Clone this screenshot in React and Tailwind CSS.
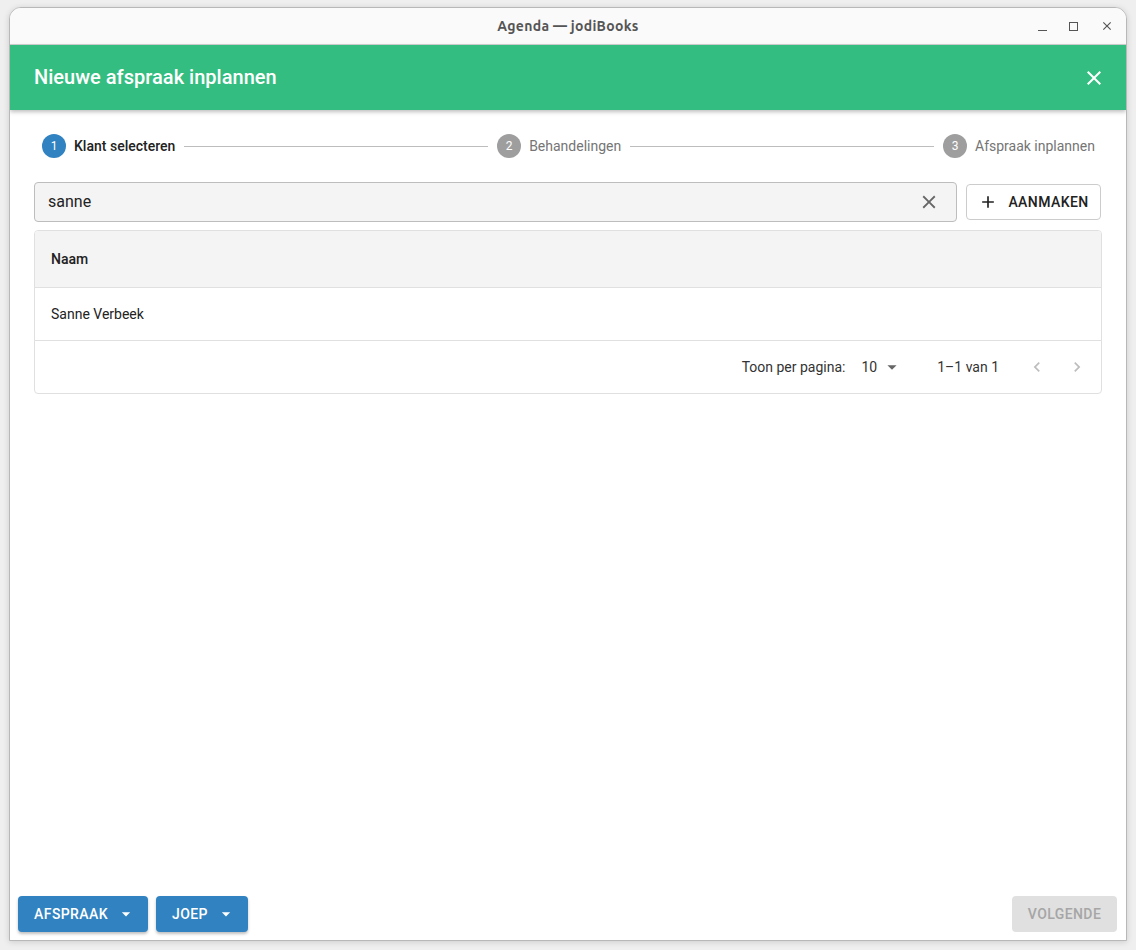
import React from "react";

const roboto = { fontFamily: "Roboto, 'Noto Sans', sans-serif" };
const medium = { fontFamily: "'Roboto Medium', Roboto, sans-serif", fontWeight: 500 };

function CloseIcon({ className }) {
  return (
    <svg viewBox="0 0 24 24" className={className} fill="currentColor">
      <path d="M19 6.41 17.59 5 12 10.59 6.41 5 5 6.41 10.59 12 5 17.59 6.41 19 12 13.41 17.59 19 19 17.59 13.41 12z" />
    </svg>
  );
}

function Caret({ className }) {
  return (
    <svg viewBox="0 0 24 24" className={className} fill="currentColor">
      <path d="M7 10l5 5 5-5z" />
    </svg>
  );
}

function Step({ n, label, active }) {
  return (
    <div className="flex items-center gap-2 shrink-0">
      <div
        className={`w-6 h-6 rounded-full flex items-center justify-center text-[12px] text-white ${
          active ? "bg-[#3182c1]" : "bg-[#9e9e9e]"
        }`}
      >
        {n}
      </div>
      <span className={`text-[14px] ${active ? "text-[#222]" : "text-[#757575]"}`} style={active ? medium : undefined}>
        {label}
      </span>
    </div>
  );
}

export default function App() {
  return (
    <div className="w-[1136px] h-[950px] bg-[#efefef] pt-[7px] pl-[9px] pr-[9px] pb-[9px]" style={roboto}>
      <div className="w-[1118px] h-[934px] bg-white rounded-t-[12px] border border-[#b8b8b8] flex flex-col overflow-hidden shadow-[0_1px_6px_rgba(0,0,0,0.15)]">
        {/* title bar */}
        <div className="h-[37px] shrink-0 bg-[#fafafa] border-b border-[#d0d0d0] flex items-center relative">
          <div
            className="flex-1 text-center text-[14px] font-bold text-[#555] tracking-[0.3px]"
            style={{ fontFamily: "'Ubuntu', 'DejaVu Sans', sans-serif" }}
          >
            Agenda — jodiBooks
          </div>
          <div className="absolute right-0 top-0 h-full flex items-center gap-[22px] pr-[12px] text-[#555]">
            <div className="w-[9px] h-[1px] bg-[#555] mt-[9px]" />
            <div className="w-[9px] h-[9px] border border-[#555]" />
            <CloseIcon className="w-[14px] h-[14px]" />
          </div>
        </div>

        {/* green header */}
        <div className="h-[65px] shrink-0 bg-[#33bd80] flex items-center justify-between pl-[24px] pr-[20px] shadow-[0_2px_4px_rgba(0,0,0,0.25)] relative z-10">
          <div className="text-white text-[20px] pb-[2px]" style={medium}>Nieuwe afspraak inplannen</div>
          <CloseIcon className="w-[24px] h-[24px] text-white" />
        </div>

        {/* content */}
        <div className="flex-1 flex flex-col px-[24px] pt-[23px]">
          {/* stepper */}
          <div className="flex items-center pl-[8px] pr-[7px] h-[26px]">
            <Step n="1" label="Klant selecteren" active />
            <div className="flex-1 h-px bg-[#bdbdbd] mx-[9px]" />
            <Step n="2" label="Behandelingen" />
            <div className="flex-1 h-px bg-[#bdbdbd] mx-[9px]" />
            <Step n="3" label="Afspraak inplannen" />
          </div>

          {/* search */}
          <div className="flex items-center gap-[9px] mt-[23px]">
            <div className="flex-1 h-[40px] bg-[#f4f4f4] border border-[#bdbdbd] rounded-[4px] flex items-center pl-[13px] pr-[16px]">
              <span className="flex-1 text-[16px] text-[#222]">sanne</span>
              <CloseIcon className="w-[22px] h-[22px] text-[#666]" />
            </div>
            <div
              className="w-[135px] h-[36px] border border-[#ccc] rounded-[4px] bg-white flex items-center justify-center gap-[10px] text-[14px] tracking-[0.4px] text-[#222] mr-[1px]"
              style={medium}
            >
              <svg viewBox="0 0 24 24" className="w-[20px] h-[20px]" fill="currentColor">
                <path d="M19 13h-6v6h-2v-6H5v-2h6V5h2v6h6v2z" />
              </svg>
              AANMAKEN
            </div>
          </div>

          {/* table */}
          <div className="mt-[8px] border border-[#e0e0e0] rounded-[4px] overflow-hidden">
            <div
              className="h-[57px] bg-[#f4f4f4] border-b border-[#e0e0e0] flex items-center px-[16px] text-[14px] text-[#222]"
              style={medium}
            >
              Naam
            </div>
            <div className="h-[53px] border-b border-[#e0e0e0] flex items-center px-[16px] text-[14px] text-[#222]">
              Sanne Verbeek
            </div>
            <div className="h-[52px] flex items-center justify-end pr-[14px] text-[14px] text-[#333]">
              <span>Toon per pagina:</span>
              <span className="ml-[16px]">10</span>
              <Caret className="w-[22px] h-[22px] text-[#666] ml-[4px]" />
              <span className="ml-[34px]">1–1 van 1</span>
              <svg viewBox="0 0 24 24" className="w-[20px] h-[20px] text-[#bdbdbd] ml-[28px]" fill="currentColor">
                <path d="M15.41 7.41 14 6l-6 6 6 6 1.41-1.41L10.83 12z" />
              </svg>
              <svg viewBox="0 0 24 24" className="w-[20px] h-[20px] text-[#bdbdbd] ml-[20px]" fill="currentColor">
                <path d="M10 6 8.59 7.41 13.17 12l-4.58 4.59L10 18l6-6z" />
              </svg>
            </div>
          </div>

          <div className="flex-1" />

          {/* bottom actions */}
          <div className="flex items-center justify-between -mx-[16px] mb-[8px]">
            <div className="flex gap-[8px]">
              <div
                className="h-[36px] w-[130px] bg-[#3182c1] rounded-[4px] flex items-center justify-center gap-[8px] pl-[4px] text-white text-[14px] tracking-[0.4px] shadow-[0_2px_3px_rgba(0,0,0,0.25)]"
                style={medium}
              >
                AFSPRAAK
                <Caret className="w-[20px] h-[20px]" />
              </div>
              <div
                className="h-[36px] w-[92px] bg-[#3182c1] rounded-[4px] flex items-center justify-center gap-[8px] pl-[4px] text-white text-[14px] tracking-[0.4px] shadow-[0_2px_3px_rgba(0,0,0,0.25)]"
                style={medium}
              >
                JOEP
                <Caret className="w-[20px] h-[20px]" />
              </div>
            </div>
            <div
              className="h-[36px] w-[105px] bg-[#e0e0e0] rounded-[4px] flex items-center justify-center text-[#a6a6a6] text-[14px] tracking-[0.4px] mr-[1px]"
              style={medium}
            >
              VOLGENDE
            </div>
          </div>
        </div>
      </div>
    </div>
  );
}
